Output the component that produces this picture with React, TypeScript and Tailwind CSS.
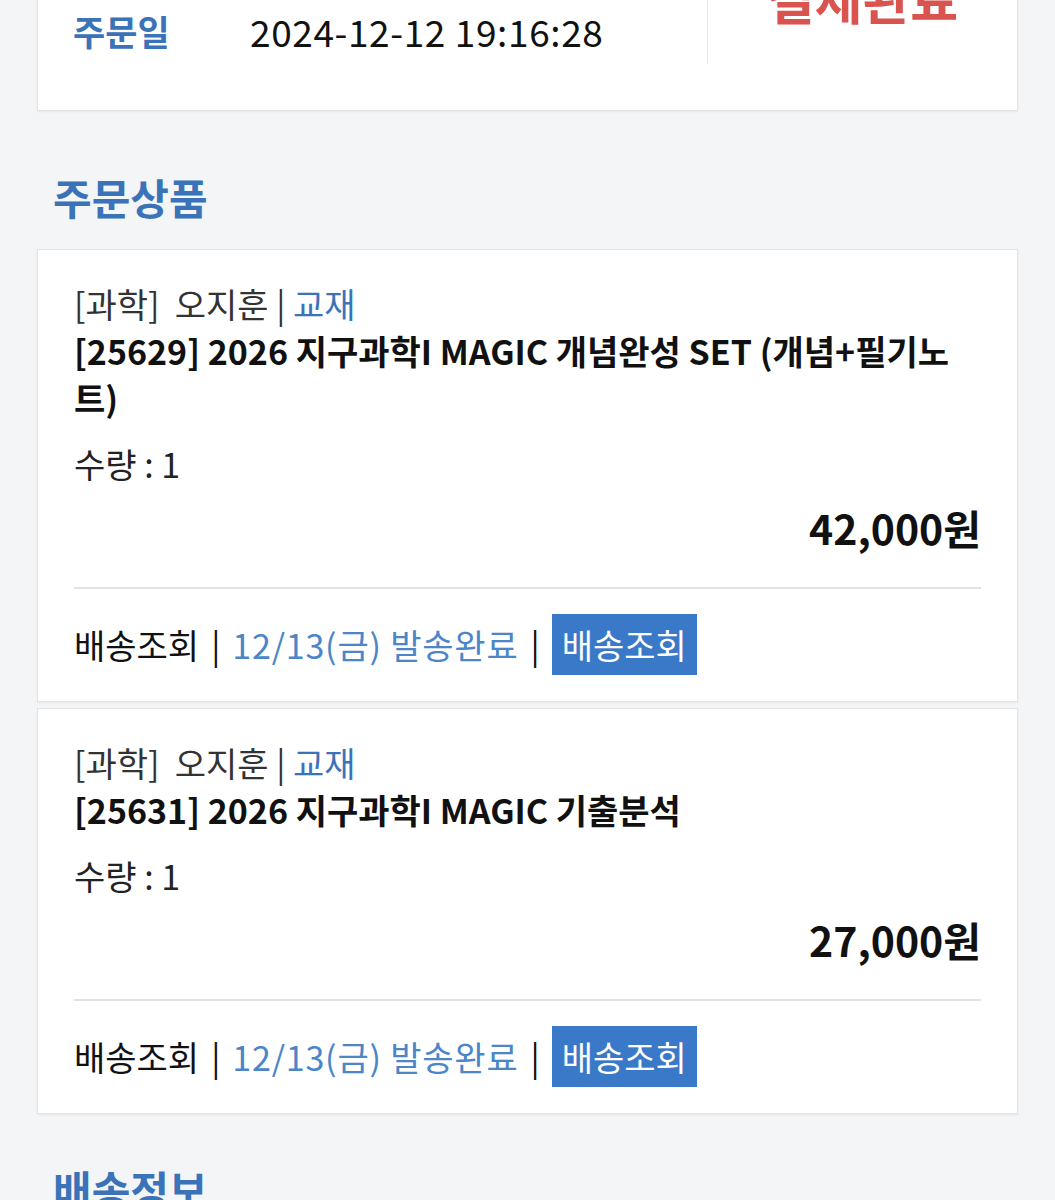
const items = [
  {
    id: 1,
    title: '[25629] 2026 지구과학I MAGIC 개념완성 SET (개념+필기노트)',
    qty: 1,
    price: '42,000원',
    date: '12/13(금) 발송완료',
  },
  {
    id: 2,
    title: '[25631] 2026 지구과학I MAGIC 기출분석',
    qty: 1,
    price: '27,000원',
    date: '12/13(금) 발송완료',
  },
];

export default function App() {
  return (
    <div
      className="min-h-[1200px] overflow-hidden bg-[#f4f5f7] px-[37px] text-[#222]"
      style={{ fontFamily: '"Noto Sans CJK KR", "Noto Sans", sans-serif' }}
    >
      {/* Order summary (scrolled partly out of view) */}
      <div className="-mt-[40px] border border-[#e3e3e3] bg-white pb-[46px] shadow-[0_1px_2px_rgba(0,0,0,0.06)]">
        <div className="flex">
          <div className="w-[670px] border-r border-[#e6e6e6] pt-[46px] pb-[9px] pl-[35px]">
            <div className="flex items-center leading-[48px]">
              <span className="w-[177px] text-[35px] font-bold text-[#3b73b9]">주문일</span>
              <span className="text-[37px] text-[#111] tracking-[0.6px]">2024-12-12 19:16:28</span>
            </div>
          </div>
          <div className="flex flex-1 justify-center pt-[11px]">
            <span className="text-[52px] leading-[52px] font-bold text-[#d9534f]">결제완료</span>
          </div>
        </div>
      </div>

      <h2 className="mt-[58px] mb-[24px] pl-[16px] text-[42px] leading-[56px] font-bold text-[#3b73b9]">주문상품</h2>

      <div className="flex flex-col gap-[6px]">
        {items.map((item) => (
          <div
            key={item.id}
            className="border border-[#e3e3e3] bg-white px-[36px] pt-[30px] pb-[26px] shadow-[0_1px_2px_rgba(0,0,0,0.06)]"
          >
            <p className="text-[34px] leading-[47px] text-[#333]">
              [과학]&nbsp; 오지훈 | <span className="text-[#3b73b9]">교재</span>
            </p>
            <p className="text-[34px] leading-[47px] font-bold text-[#111]">{item.title}</p>
            <p className="mt-[19px] text-[34px] leading-[47px] text-[#222]">수량 : {item.qty}</p>
            <p className="mt-[16px] text-right text-[41px] leading-[48px] font-bold text-[#111]">{item.price}</p>
            <div className="mt-[36px] h-[2px] bg-[#e2e2e2]" />
            <div className="mt-[25px] flex items-center gap-[12px] text-[34px] leading-[61px]">
              <span className="text-[#111]">배송조회</span>
              <span className="text-[#111]">|</span>
              <span className="text-[#4a86c8] tracking-[0.8px]">{item.date}</span>
              <span className="text-[#111]">|</span>
              <button className="bg-[#3a78c8] px-[10px] text-white leading-[61px]">배송조회</button>
            </div>
          </div>
        ))}
      </div>

      <h2 className="mt-[47px] pl-[16px] text-[42px] leading-[56px] font-bold text-[#3b73b9]">배송정보</h2>
    </div>
  );
}
